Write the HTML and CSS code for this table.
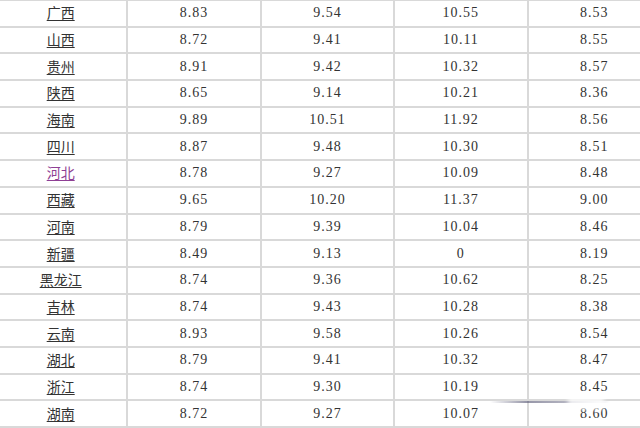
FILE: index.html
```html
<!DOCTYPE html>
<html lang="zh-CN">
<head>
<meta charset="utf-8">
<title>各地价格</title>
<link rel="stylesheet" href="styles.css">
</head>
<body>
<div class="wrap">
<table class="prices">
<colgroup><col class="c"><col class="c"><col class="c"><col class="c"><col class="c"></colgroup>
<tbody>
<tr><td><a href="#">广西</a></td><td>8.83</td><td>9.54</td><td>10.55</td><td>8.53</td></tr>
<tr><td><a href="#">山西</a></td><td>8.72</td><td>9.41</td><td>10.11</td><td>8.55</td></tr>
<tr><td><a href="#">贵州</a></td><td>8.91</td><td>9.42</td><td>10.32</td><td>8.57</td></tr>
<tr><td><a href="#">陕西</a></td><td>8.65</td><td>9.14</td><td>10.21</td><td>8.36</td></tr>
<tr><td><a href="#">海南</a></td><td>9.89</td><td>10.51</td><td>11.92</td><td>8.56</td></tr>
<tr><td><a href="#">四川</a></td><td>8.87</td><td>9.48</td><td>10.30</td><td>8.51</td></tr>
<tr><td><a href="#" class="visited">河北</a></td><td>8.78</td><td>9.27</td><td>10.09</td><td>8.48</td></tr>
<tr><td><a href="#">西藏</a></td><td>9.65</td><td>10.20</td><td>11.37</td><td>9.00</td></tr>
<tr><td><a href="#">河南</a></td><td>8.79</td><td>9.39</td><td>10.04</td><td>8.46</td></tr>
<tr><td><a href="#">新疆</a></td><td>8.49</td><td>9.13</td><td>0</td><td>8.19</td></tr>
<tr><td><a href="#">黑龙江</a></td><td>8.74</td><td>9.36</td><td>10.62</td><td>8.25</td></tr>
<tr><td><a href="#">吉林</a></td><td>8.74</td><td>9.43</td><td>10.28</td><td>8.38</td></tr>
<tr><td><a href="#">云南</a></td><td>8.93</td><td>9.58</td><td>10.26</td><td>8.54</td></tr>
<tr><td><a href="#">湖北</a></td><td>8.79</td><td>9.41</td><td>10.32</td><td>8.47</td></tr>
<tr><td><a href="#">浙江</a></td><td>8.74</td><td>9.30</td><td>10.19</td><td>8.45</td></tr>
<tr><td><a href="#">湖南</a></td><td>8.72</td><td>9.27</td><td>10.07</td><td>8.60</td></tr>
</tbody>
</table>
<div class="watermark"><span class="wm-line"></span><span class="wm-blob"></span></div>
</div>
</body>
</html>
```
FILE: styles.css
```css
html, body {
  margin: 0;
  padding: 0;
  background: #ffffff;
  overflow: hidden;
}
.wrap {
  position: relative;
  width: 640px;
  height: 428px;
  overflow: hidden;
}
.prices {
  border-collapse: collapse;
  table-layout: fixed;
  width: 667px;
  margin-left: -7px;
  margin-top: -1px;
  font-family: "Liberation Serif", "Noto Sans CJK SC", serif;
  font-size: 14px;
  color: #333333;
}
.prices col.c {
  width: 133.4px;
}
.prices td {
  border: 2px solid #d9d9d9;
  height: 24.7px;
  padding: 0;
  text-align: center;
  vertical-align: middle;
  letter-spacing: 1px;
  line-height: 16px;
}
.prices td:first-child {
  letter-spacing: 0;
}
.prices a {
  color: #333333;
  text-decoration: underline;
  text-underline-offset: 2px;
  font-family: "Noto Sans CJK SC", sans-serif;
  font-size: 14px;
}
.prices a.visited {
  color: #8e3f94;
}
.watermark {
  position: absolute;
  left: 470px;
  top: 392px;
  width: 170px;
  height: 28px;
  pointer-events: none;
}
.wm-line {
  position: absolute;
  left: 20px;
  top: 9px;
  width: 120px;
  height: 2px;
  background: linear-gradient(to right, rgba(80,80,110,0), rgba(80,80,110,0.6) 30%, rgba(80,80,110,0.4) 70%, rgba(80,80,110,0));
  filter: blur(0.6px);
}
.wm-blob {
  position: absolute;
  left: 98px;
  top: 4px;
  width: 36px;
  height: 14px;
  background: rgba(255,255,255,0.75);
  filter: blur(2px);
}
```
